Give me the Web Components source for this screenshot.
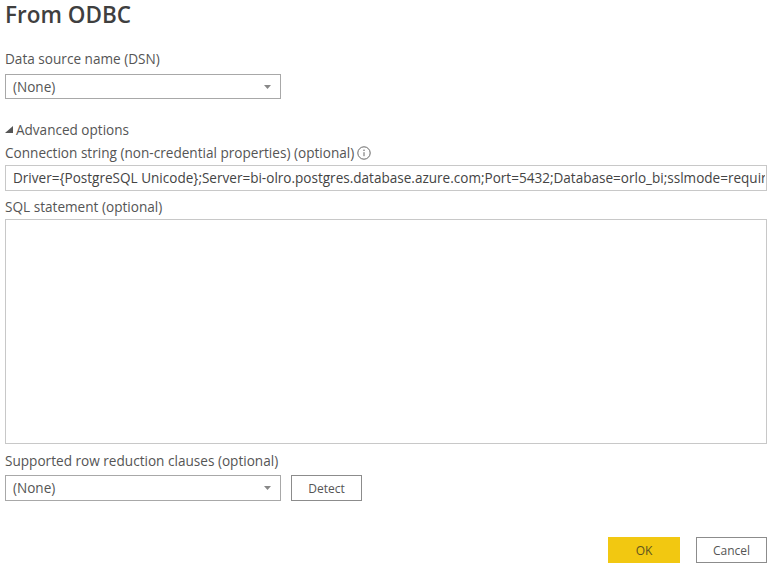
<!DOCTYPE html>
<html><head><meta charset="utf-8"><style>
html,body{margin:0;padding:0;background:#fff;width:775px;height:573px;overflow:hidden}
body{font-family:"Open Sans","Noto Sans",sans-serif;color:#444}
</style></head><body>
<odbc-dialog></odbc-dialog>
<script>
function def(name,css,html){
  customElements.define(name,class extends HTMLElement{
    constructor(){super();const r=this.attachShadow({mode:'open'});r.innerHTML='<style>'+css+'</style>'+html;}
  });
}
def('field-label',':host{display:flex;flex:none;align-items:center;gap:3px;height:18px;font:13.6px/18px "Open Sans",sans-serif;color:#555;white-space:nowrap}','<slot></slot>');
def('drop-down',`:host{display:flex;flex:none;align-items:center;justify-content:space-between;box-sizing:border-box;width:276px;height:26px;border:1px solid #a8a8a8;padding:0 9px 0 7px;font:13.55px "Open Sans",sans-serif;color:#555;background:#fff}
svg{display:block}`,'<slot></slot><svg width="7" height="4" viewBox="0 0 7 4"><path d="M0 0H7L3.5 4Z" fill="#888"/></svg>');
def('text-box',`:host{display:block;flex:none;box-sizing:border-box;height:26px;border:1px solid #c8c8c8;padding:0 1px 0 7px;background:#fff}
div{font:13.55px/25px "Open Sans",sans-serif;height:24px;color:#444;white-space:nowrap;overflow:hidden}`,'<div><slot></slot></div>');
def('text-area',':host{display:block;flex:none;box-sizing:border-box;height:225px;border:1px solid #c8c8c8;background:#fff}','');
def('action-button',`:host{display:flex;flex:none;align-items:center;justify-content:center;box-sizing:border-box;width:71px;height:26px;border:1px solid #8c8c8c;font:12px "Open Sans",sans-serif;color:#555;background:#fff}
:host([primary]){width:72px;border:none;background:#f2c811;color:#5f5520}`,'<slot></slot>');
def('info-icon',':host{display:block;flex:none;width:14px;height:14px}svg{display:block}','<svg width="14" height="14" viewBox="0 0 14 14" fill="none"><circle cx="7" cy="7" r="6.2" stroke="#666" stroke-width="1"/><path d="M7 6.2V10.2" stroke="#666" stroke-width="1"/><circle cx="7" cy="4.3" r=".75" fill="#666"/></svg>');
def('advanced-toggle',`:host{display:flex;flex:none;align-items:center;gap:3px;height:18px;font:13.55px/18px "Open Sans",sans-serif;color:#555}
svg{display:block}`,'<svg width="8" height="8" viewBox="0 0 8 8"><path d="M8 0V7H0Z" fill="#555"/></svg><slot></slot>');
def('odbc-dialog',`:host{display:flex;flex-direction:column;box-sizing:border-box;width:775px;height:573px;padding:0 8px 10px 5px}
h1{margin:0;flex:none;height:32px;font:600 22.5px/30px "Open Sans",sans-serif;color:#3f3f3f}
.row{display:flex;flex:none;gap:10px}
.foot{display:flex;flex:none;justify-content:flex-end;gap:16px;margin-top:36px}
`,`<h1>From ODBC</h1>
<field-label style="margin-top:18px">Data source name (DSN)</field-label>
<drop-down style="margin-top:6px;height:25px">(None)</drop-down>
<advanced-toggle style="margin-top:22px">Advanced options</advanced-toggle>
<field-label style="margin-top:5px">Connection string (non-credential properties) (optional)<info-icon></info-icon></field-label>
<text-box style="margin-top:3px">Driver={PostgreSQL Unicode};Server=bi-olro.postgres.database.azure.com;Port=5432;Database=orlo_bi;sslmode=require</text-box>
<field-label style="margin-top:7px">SQL statement (optional)</field-label>
<text-area style="margin-top:3px"></text-area>
<field-label style="margin-top:8px">Supported row reduction clauses (optional)</field-label>
<div class="row" style="margin-top:5px"><drop-down>(None)</drop-down><action-button>Detect</action-button></div>
<div class="foot"><action-button primary>OK</action-button><action-button>Cancel</action-button></div>`);
</script>
</body></html>
